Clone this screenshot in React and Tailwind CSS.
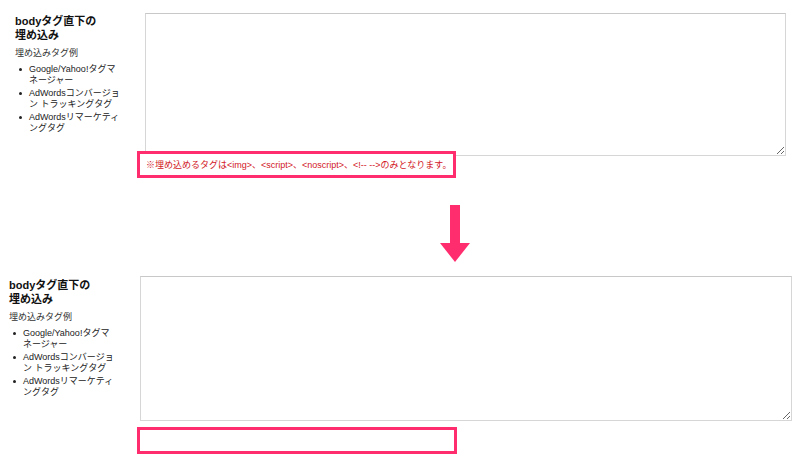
import React from "react";

const font = { fontFamily: '"Liberation Sans", "Noto Sans CJK JP", sans-serif' };

function L({ children, h = 11 }) {
  return (
    <div className={h === 14 ? "h-[14px] leading-[14px] whitespace-nowrap" : "h-[11px] leading-[11px] whitespace-nowrap"}>
      {children}
    </div>
  );
}

function Item({ a, b }) {
  return (
    <div className="flex mb-[2px]">
      <div className="w-[14px] shrink-0 h-[11px] flex items-center pl-[4px]">
        <div className="w-[3px] h-[3px] rounded-full bg-[#222]" />
      </div>
      <div>
        <L>{a}</L>
        <L>{b}</L>
      </div>
    </div>
  );
}

function Side() {
  return (
    <div className="text-[#111]">
      <div className="text-[11px] font-bold">
        <L h={14}>bodyタグ直下の</L>
        <L h={14}>埋め込み</L>
      </div>
      <div className="mt-[6px] text-[9px] text-[#333]">
        <L>埋め込みタグ例</L>
      </div>
      <div className="mt-[5px] text-[9px] text-[#222]">
        <Item a="Google/Yahoo!タグマ" b="ネージャー" />
        <Item a="AdWordsコンバージョ" b="ン トラッキングタグ" />
        <Item a="AdWordsリマーケティ" b="ングタグ" />
      </div>
    </div>
  );
}

export default function App() {
  return (
    <div className="w-[800px] h-[461px] bg-white overflow-hidden" style={font}>
      {/* top section */}
      <div className="flex pt-[13px]">
        <div className="w-[130px] pl-[15px] pt-[1px] shrink-0">
          <Side />
        </div>
        <div className="flex flex-col">
          <textarea className="ml-[15px] block w-[641px] h-[143px] border border-[#d6d6d6] border-t-[#c8c8c8] bg-white outline-none" />
          <div className="relative -mt-[5px] ml-[7px] w-[319px] h-[27px] border-[3px] border-[#ff2d6e] bg-white flex items-center pl-[6px]">
            <span className="text-[9px] leading-[12px] text-[#d2161e] whitespace-nowrap">
              ※埋め込めるタグは&lt;img&gt;、&lt;script&gt;、&lt;noscript&gt;、&lt;!-- --&gt;のみとなります。
            </span>
          </div>
        </div>
      </div>

      {/* arrow */}
      <div className="flex justify-center pl-[109px] mt-[27px]">
        <svg width="30" height="57" viewBox="0 0 30 57">
          <rect x="10" y="0" width="10" height="39" fill="#ff2d6e" />
          <polygon points="0,38 30,38 15,57" fill="#ff2d6e" />
        </svg>
      </div>

      {/* bottom section */}
      <div className="flex mt-[14px]">
        <div className="w-[140px] pl-[9px] pt-[2px] shrink-0">
          <Side />
        </div>
        <div className="flex flex-col">
          <textarea className="block w-[652px] h-[145px] border border-[#d6d6d6] border-t-[#c8c8c8] bg-white outline-none" />
          <div className="mt-[6px] -ml-[3px] w-[320px] h-[27px] border-[3px] border-[#ff2d6e] bg-white" />
        </div>
      </div>
    </div>
  );
}
